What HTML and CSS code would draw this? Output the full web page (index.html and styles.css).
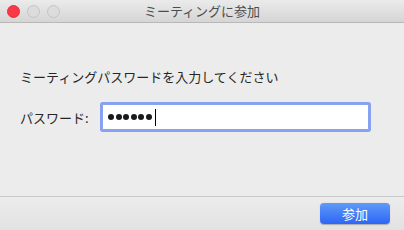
FILE: index.html
```html
<!DOCTYPE html>
<html>
<head>
<meta charset="utf-8">
<link rel="stylesheet" href="styles.css">
</head>
<body>
<div class="window">
  <div class="titlebar">
    <div class="lights">
      <span class="light red"></span>
      <span class="light gray"></span>
      <span class="light gray"></span>
    </div>
    <div class="title">ミーティングに参加</div>
  </div>
  <div class="content">
    <div class="prompt">ミーティングパスワードを入力してください</div>
    <div class="row">
      <label class="label">パスワード:</label>
      <div class="field">
        <span class="dots"><i></i><i></i><i></i><i></i><i></i><i></i></span><span class="caret"></span>
      </div>
    </div>
  </div>
  <div class="footer">
    <button class="btn">参加</button>
  </div>
</div>
</body>
</html>
```
FILE: styles.css
```css
* { box-sizing: border-box; }
html, body { margin: 0; padding: 0; }
body {
  width: 404px;
  height: 230px;
  overflow: hidden;
  font-family: "Noto Sans CJK JP", "Noto Sans", sans-serif;
  background: #ececec;
}
.window {
  width: 404px;
  height: 230px;
  display: flex;
  flex-direction: column;
  background: #ececec;
}
.titlebar {
  height: 23px;
  position: relative;
  background: linear-gradient(#ebebeb, #d5d5d5);
  border-bottom: 1px solid #b8b8b8;
  display: flex;
  align-items: center;
  justify-content: center;
}
.lights {
  position: absolute;
  left: 7px;
  top: 5px;
  display: flex;
  gap: 7px;
}
.light {
  width: 13px;
  height: 13px;
  border-radius: 50%;
}
.light.red {
  background: #fc3844;
  border: 1px solid #e0353f;
}
.light.gray {
  background: #dcdcdc;
  border: 1px solid #c4c4c4;
}
.title {
  font-size: 13px;
  color: #4d4d4d;
  line-height: 22px;
}
.content {
  flex: 1;
  padding: 45px 20px 0 20px;
  display: flex;
  flex-direction: column;
}
.prompt {
  font-size: 13px;
  color: #262626;
  line-height: 18px;
}
.row {
  margin-top: 18px;
  display: flex;
  align-items: center;
}
.label {
  font-size: 13px;
  color: #262626;
  width: 80px;
}
.field {
  width: 267px;
  height: 26px;
  background: #fff;
  border: 1px solid #8aa3f0;
  box-shadow: 0 0 0 2px #87a1f1;
  border-radius: 1px;
  margin-left: 2px;
  display: flex;
  align-items: center;
  padding-left: 5px;
}
.dots {
  display: flex;
  gap: 1.6px;
}
.dots i {
  display: block;
  width: 6px;
  height: 6px;
  border-radius: 50%;
  background: #1a1a1a;
}
.caret {
  width: 1px;
  height: 17px;
  background: #000;
  margin-left: 3px;
}
.footer {
  height: 34px;
  border-top: 1px solid #c8c8c8;
  background: linear-gradient(#ececec, #e2e2e2);
  display: flex;
  justify-content: flex-end;
  align-items: center;
  padding-right: 14px;
}
.btn {
  width: 70px;
  height: 21px;
  border: none;
  border-radius: 4px;
  background: linear-gradient(#5f9af9, #2d66f5);
  color: #fff;
  font-family: "Noto Sans CJK JP", sans-serif;
  font-size: 13px;
  padding: 0;
  line-height: 21px;
  box-shadow: 0 0.5px 1px rgba(0,0,0,0.25);
}
```
